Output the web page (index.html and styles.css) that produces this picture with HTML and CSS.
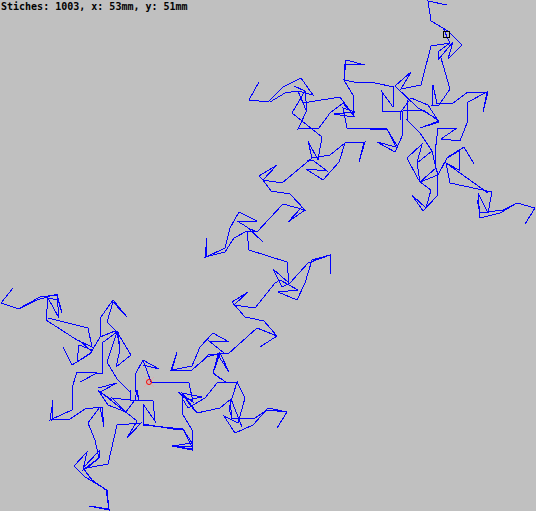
FILE: index.html
```html
<!DOCTYPE html>
<html lang="en">
<head>
<meta charset="utf-8">
<title>Stitches</title>
<link rel="stylesheet" href="styles.css">
</head>
<body>
<main class="canvas">
<div class="status">Stiches: 1003, x: 53mm, y: 51mm</div>
<svg class="plot" width="536" height="511" viewBox="0 0 536 511">
<path class="stitch" d="M447 5L428 1L431 21L443 28L449 32L462 45L448 59L453 42L438 60L438 52L450 43L431 46L421 85L401 89L411 72L395 86L418 108L437 119
M443 28L450 43M441 58L450 89L439 105L432 105L433 85L437 104L453 103L468 92L488 92L483 112L487 92L468 102L467 123L460 141L441 139L457 128L438 128L435 153L436 168L438 175L437 196L423 211L412 195L426 208L431 190L420 182L417 163L422 144L407 158L417 177L420 182L438 175L447 158L459 151L459 170L446 163L450 183L492 192L488 213L478 193L480 218L500 213L517 203L535 208L525 224
M448 157L464 147L474 164M446 163L488 193M480 213L503 210L517 203M477 200L480 213M478 193L488 213
M436 168L420 182M432 151L417 163M406 119L420 133L432 151L436 168
M408 100L407 120M411 98L400 113L401 120M423 110L383 112L382 92L393 107L394 87L375 83L354 82L344 80L354 97L353 117L334 114L355 112L343 108L347 128L387 129L396 147L377 142L395 152L403 134L402 114L403 112
M411 98L428 105L439 122L420 128L439 121L423 110M396 147L377 142M397 146L387 129L370 129
M259 82L249 100L268 102L283 87L301 78L313 95L298 91L285 93L270 102M294 86L305 91L307 110L298 129L319 128L330 113L343 103L355 117L340 97L303 103L298 91L306 110M305 91L292 113L322 137L318 160L308 141L312 158L282 183L263 180L277 165L259 176L263 180L271 191L290 194L305 210L283 204L257 232L248 228L263 242L247 227L237 221L257 221L239 212L230 228L225 248L206 257L207 238L205 257L225 252L234 238L247 231L249 250L287 262L289 283L273 269L282 287L290 283L308 263L330 255L330 274L330 255L312 260L305 283L297 300L278 292L298 290L280 280L275 283L255 308L234 305L248 292L232 302L245 317L264 321L277 336L257 328L228 354L220 353L229 372L218 355L213 373L221 379
M312 158L330 155L345 143L365 142L359 162L364 142M345 143L339 162L323 180L306 169L327 171L314 161L307 160M346 60L365 65L345 64L344 80M346 60L345 70M305 210L288 222L302 207M247 231L257 232
M220 353L207 357L192 370L171 370L177 352L172 370L192 366L200 347L213 333L229 342L209 341L224 353M277 336L260 347M192 370L200 363L208 355L220 354L213 373L227 383L237 382L245 398L238 423L224 416L235 433L253 425L268 408L287 412L277 428M287 412L267 410L255 418L232 419L229 408L237 382L217 383L205 398L188 408L182 398L182 413L192 430L192 450L172 446L192 447L183 429L143 425L143 404L155 421L153 401L132 400L130 400
M231 399L242 427M230 400L232 419M231 399L220 408L197 413L190 405L182 393L202 397L187 400L178 392L193 402L189 383L151 382L143 360L135 375L136 392L139 400L137 390M143 360L159 369L143 365
M13 288L1 303L19 309L37 300L57 294L62 313L58 300L48 298L59 318L57 295L40 297L20 308M48 298L46 320L77 340L92 347L88 328L48 318M79 340L92 352L77 362L79 345L92 350M63 347L72 365L90 354L100 337L115 331L118 332L120 350L116 367L120 350L117 332L102 343L102 373L97 373L80 382L97 373L77 372L72 388L72 410L50 420L53 400L52 420L70 419L85 409L102 407L104 427L100 407L88 423L95 440L99 458L83 470L87 452L74 466L85 477L107 490L109 510L89 506L109 509L106 490L92 480L83 468L99 451L99 458L87 468L108 464L117 425L141 423L127 438L137 421L98 390L108 405L126 412L112 398L130 400L130 390M126 412L135 400L137 390M100 337L101 317L113 300L127 317L113 302L107 322L117 332L131 355L116 367M117 332L107 362L117 379L130 392L130 400M98 388L117 383L100 392L112 400M143 405L143 424L173 429L183 429L192 443L172 446L192 449L192 430L182 413L182 393L197 413"/>
<rect class="needle" x="443.500" y="31.500" width="6" height="6"/>
<g class="origin">
<path class="cross" d="M144 377L154 387M154 377L144 387"/>
<circle class="dot" cx="149" cy="382" r="2.500"/>
</g>
</svg>
</main>
</body>
</html>
```
FILE: styles.css
```css
html, body {
  margin: 0;
  padding: 0;
  background: #c0c0c0;
}

.canvas {
  position: relative;
  width: 536px;
  height: 511px;
  overflow: hidden;
  background: #c0c0c0;
}

.status {
  position: absolute;
  left: 1px;
  top: 1px;
  font: bold 10px/12px "DejaVu Sans Mono", monospace;
  color: #000;
  white-space: nowrap;
  z-index: 1;
}

.plot {
  display: block;
}

.stitch {
  fill: none;
  stroke: #0000ff;
  stroke-width: 1;
  shape-rendering: crispEdges;
}

.needle {
  fill: none;
  stroke: #000;
  stroke-width: 1;
  shape-rendering: crispEdges;
}

.cross {
  fill: none;
  stroke: #ff9090;
  stroke-width: 1;
  opacity: 0.5;
}

.dot {
  fill: none;
  stroke: #ff0000;
  stroke-width: 1;
}
```
